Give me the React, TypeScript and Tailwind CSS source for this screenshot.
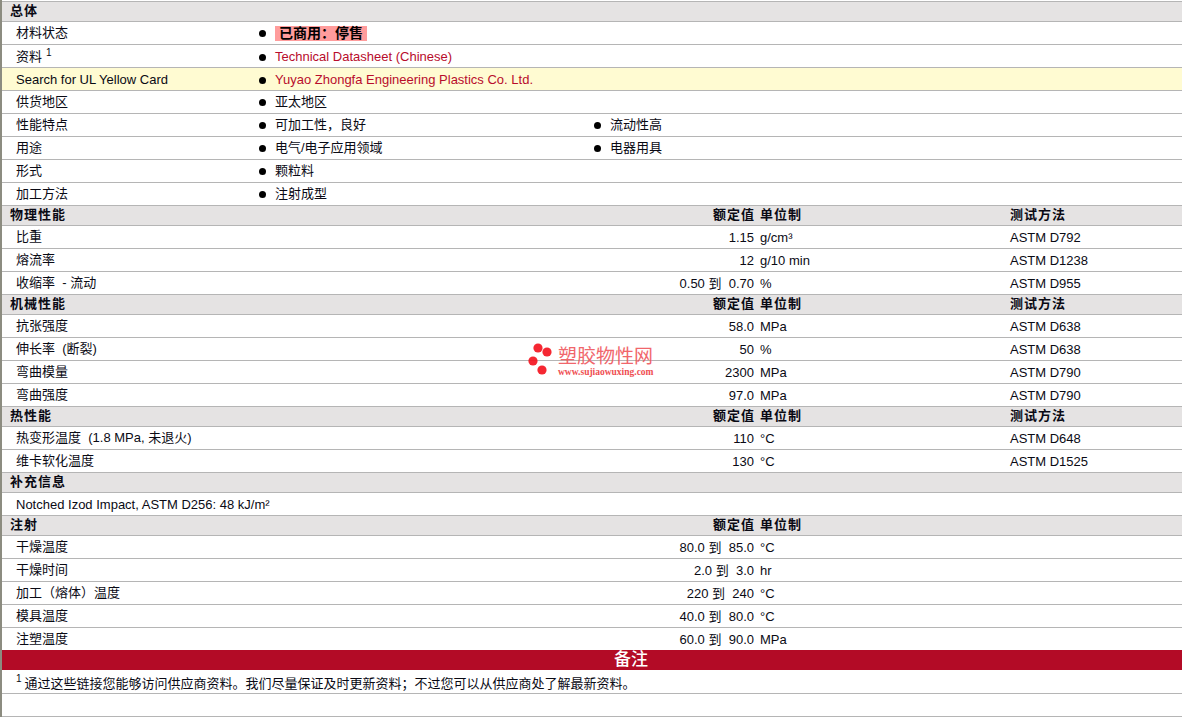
const cjk = '"Liberation Sans", "Noto Sans CJK SC", sans-serif';

const Bullet = () => <span className="mr-[9px] inline-block h-[7px] w-[7px] shrink-0 rounded-full bg-black" />;

const Header = ({ title, cols }: { title: string; cols?: string[] }) => (
    <div className="flex h-5 items-center border-b border-[#b5b5b5] bg-[#e5e3e3] pb-[2px] pl-2 text-[13px] font-bold tracking-[1px]">
        <div className="flex-1">{title}</div>
        {cols && <div className="w-[80px] text-right">{cols[0]}</div>}
        {cols && <div className="ml-[5px] w-[250px]">{cols[1]}</div>}
        <div className="w-[172px]">{cols && cols[2]}</div>
    </div>
);

const InfoRow = ({ label, items, yellow, link, sup }: { label: string; items: React.ReactNode[]; yellow?: boolean; link?: boolean; sup?: boolean }) => (
    <div className={`flex h-[23px] items-center border-b border-[#b5b5b5] pl-[14px] text-[13px] ${yellow ? 'bg-[#fffbd2]' : ''}`}>
        <div className={`w-[243px] ${yellow || sup ? 'pt-[2px]' : ''}`}>
            {label}
            {sup && <sup className="ml-1 text-[10px]">1</sup>}
        </div>
        {items.map((item, i) => (
            <div key={i} className={`flex items-center ${i === 0 ? 'w-[335px]' : ''} ${link ? 'pt-[2px] text-[#b80c2c]' : ''}`}>
                <Bullet />
                <span>{item}</span>
            </div>
        ))}
    </div>
);

const DataRow = ({ label, value, unit, test, last }: { label: string; value: string; unit: string; test?: string; last?: boolean }) => (
    <div className={`flex items-center pl-[14px] text-[13px] ${last ? 'h-[22px]' : 'h-[23px] border-b border-[#b5b5b5]'}`}>
        <div className="flex-1 whitespace-pre">{label}</div>
        <div className="w-[159px] whitespace-pre pt-[2px] text-right">{value}</div>
        <div className="ml-[6px] w-[250px] pt-[2px]">{unit}</div>
        <div className="w-[172px] pt-[2px]">{test}</div>
    </div>
);

const propCols = ['额定值', '单位制', '测试方法'];
const injCols = ['额定值', '单位制', ''];

export default function App() {
    return (
        <div className="relative h-[719px] w-[1182px] overflow-hidden bg-white text-[#0a0a14]" style={{ fontFamily: cjk }}>
            <div className="border-l-2 border-[#8c8c80] pt-px">
                <div className="border-t border-[#b5b5b5]" />
                <Header title="总体" />
                <InfoRow label="材料状态" items={[<b className="block bg-[#ff9c9c] px-1 text-sm leading-[15px] text-black">已商用：停售</b>]} />
                <InfoRow label="资料" sup link items={['Technical Datasheet (Chinese)']} />
                <InfoRow label="Search for UL Yellow Card" yellow link items={['Yuyao Zhongfa Engineering Plastics Co. Ltd.']} />
                <InfoRow label="供货地区" items={['亚太地区']} />
                <InfoRow label="性能特点" items={['可加工性，良好', '流动性高']} />
                <InfoRow label="用途" items={['电气/电子应用领域', '电器用具']} />
                <InfoRow label="形式" items={['颗粒料']} />
                <InfoRow label="加工方法" items={['注射成型']} />

                <Header title="物理性能" cols={propCols} />
                <DataRow label="比重" value="1.15" unit="g/cm³" test="ASTM D792" />
                <DataRow label="熔流率" value="12" unit="g/10 min" test="ASTM D1238" />
                <DataRow label="收缩率  - 流动" value="0.50 到  0.70" unit="%" test="ASTM D955" />

                <Header title="机械性能" cols={propCols} />
                <DataRow label="抗张强度" value="58.0" unit="MPa" test="ASTM D638" />
                <DataRow label="伸长率  (断裂)" value="50" unit="%" test="ASTM D638" />
                <DataRow label="弯曲模量" value="2300" unit="MPa" test="ASTM D790" />
                <DataRow label="弯曲强度" value="97.0" unit="MPa" test="ASTM D790" />

                <Header title="热性能" cols={propCols} />
                <DataRow label="热变形温度  (1.8 MPa, 未退火)" value="110" unit="°C" test="ASTM D648" />
                <DataRow label="维卡软化温度" value="130" unit="°C" test="ASTM D1525" />

                <Header title="补充信息" />
                <div className="flex h-[23px] items-center border-b border-[#b5b5b5] pl-[14px] pt-[2px] text-[13px]">
                    Notched Izod Impact, ASTM D256: 48 kJ/m²
                </div>

                <Header title="注射" cols={injCols} />
                <DataRow label="干燥温度" value="80.0 到  85.0" unit="°C" />
                <DataRow label="干燥时间" value="2.0 到  3.0" unit="hr" />
                <DataRow label="加工（熔体）温度" value="220 到  240" unit="°C" />
                <DataRow label="模具温度" value="40.0 到  80.0" unit="°C" />
                <DataRow label="注塑温度" value="60.0 到  90.0" unit="MPa" last />

                <div className="flex h-5 items-center justify-center bg-[#b30b26] pl-[78px] text-[17px] font-medium text-white">
                    备注
                </div>
                <div className="flex h-6 items-center border-b border-[#b5b5b5] pl-[14px] pt-[4px] text-[13px]">
                    <sup className="mr-[3px] text-[10px]">1</sup>
                    通过这些链接您能够访问供应商资料。我们尽量保证及时更新资料；不过您可以从供应商处了解最新资料。
                </div>
                <div className="h-[23px] border-b border-[#b5b5b5]" />
            </div>

            {/* watermark */}
            <div className="pointer-events-none absolute left-[528px] top-[343px] flex items-start opacity-90">
                <svg width="26" height="34" viewBox="0 0 26 34" className="mr-1">
                    <circle cx="10" cy="5" r="4.6" fill="#f5101c" />
                    <circle cx="19" cy="9" r="4.6" fill="#f5101c" />
                    <circle cx="5" cy="18" r="4.6" fill="#f5101c" />
                    <circle cx="14" cy="27" r="4.6" fill="#f5101c" />
                </svg>
                <div className="mt-[3px] flex flex-col text-[#f0565c]">
                    <span className="text-[19px] leading-[21px]">塑胶物性网</span>
                    <span className="text-[9.5px] leading-[10px] font-bold text-[#ee3a40]" style={{ fontFamily: '"Liberation Serif", serif' }}>www.sujiaowuxing.com</span>
                </div>
            </div>
        </div>
    );
}
